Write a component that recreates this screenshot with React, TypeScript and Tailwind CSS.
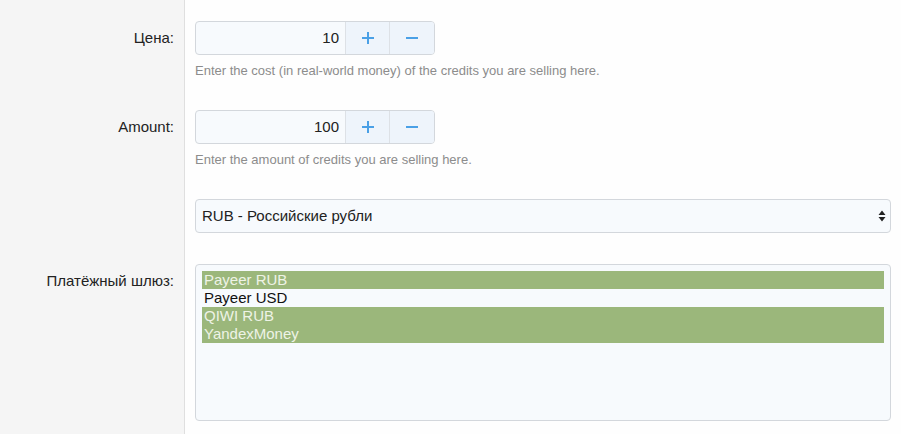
import React from "react";

const font = { fontFamily: '"Liberation Sans", Arial, sans-serif' };

function Spinner({ value }: { value: string }) {
  return (
    <div className="flex h-[34px] w-[240px] rounded-[4px] border border-[#d3d7dc] bg-[#f7fafd] overflow-hidden">
      <div className="flex-1 flex items-center justify-end pr-[6px] text-[15px] text-[#222]">{value}</div>
      <div className="w-[44px] flex items-center justify-center border-l border-[#dde1e6] bg-[#eef4fb]">
        <svg width="12" height="12" viewBox="0 0 12 12">
          <path d="M6 0v12M0 6h12" stroke="#4aa0e6" strokeWidth="2" />
        </svg>
      </div>
      <div className="w-[45px] flex items-center justify-center border-l border-[#dde1e6] bg-[#eef4fb]">
        <svg width="12" height="12" viewBox="0 0 12 12">
          <path d="M0 6h12" stroke="#4aa0e6" strokeWidth="2" />
        </svg>
      </div>
    </div>
  );
}

function Row({ label, pt, children }: { label?: string; pt: string; children: React.ReactNode }) {
  return (
    <div className="flex">
      <div className={`w-[185px] shrink-0 bg-[#f5f5f5] border-r border-[#dfdfdf] pr-[10px] text-right text-[15px] leading-[34px] text-[#222] ${pt}`}>
        {label}
      </div>
      <div className={`flex-1 pl-[10px] pr-[10px] ${pt}`}>{children}</div>
    </div>
  );
}

const options = [
  { name: "Payeer RUB", sel: true },
  { name: "Payeer USD", sel: false },
  { name: "QIWI RUB", sel: true },
  { name: "YandexMoney", sel: true },
];

export default function App() {
  return (
    <div className="w-[901px] h-[434px] flex flex-col bg-[#fefefe] overflow-hidden" style={font}>
      <Row label="Цена:" pt="pt-[21px]">
        <Spinner value="10" />
        <div className="mt-[7px] text-[13px] leading-[18px] text-[#8c8c8c]">
          Enter the cost (in real-world money) of the credits you are selling here.
        </div>
      </Row>
      <Row label="Amount:" pt="pt-[30px]">
        <Spinner value="100" />
        <div className="mt-[7px] text-[13px] leading-[18px] text-[#8c8c8c]">
          Enter the amount of credits you are selling here.
        </div>
      </Row>
      <Row pt="pt-[30px]">
        <div className="h-[34px] w-full rounded-[4px] border border-[#d3d7dc] bg-[#f7fafd] flex items-center pl-[6px] pr-[4px] text-[15px] text-[#222]">
          <span className="flex-1">RUB - Российские рубли</span>
          <svg width="8" height="12" viewBox="0 0 8 12">
            <path d="M4 0.5L7.5 5H0.5Z M4 11.5L7.5 7H0.5Z" fill="#222" />
          </svg>
        </div>
      </Row>
      <Row label="Платёжный шлюз:" pt="pt-[31px]">
        <div className="h-[157px] w-full rounded-[4px] border border-[#d3d7dc] bg-[#f7fafd] p-[6px]">
          {options.map((o) => (
            <div
              key={o.name}
              className={`h-[18px] leading-[18px] pl-[2px] text-[15px] ${o.sel ? "bg-[#9bb77b] text-[#eef3e6]" : "text-[#111]"}`}
            >
              {o.name}
            </div>
          ))}
        </div>
      </Row>
      <div className="flex flex-1">
        <div className="w-[185px] shrink-0 bg-[#f5f5f5] border-r border-[#dfdfdf]" />
        <div className="flex-1" />
      </div>
    </div>
  );
}
